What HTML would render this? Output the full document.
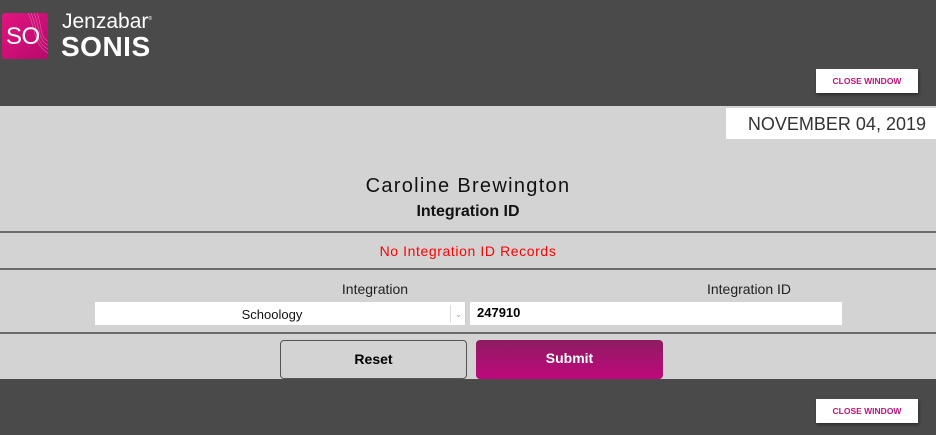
<!DOCTYPE html>
<html><head><meta charset="utf-8"><style>
*{margin:0;padding:0;box-sizing:border-box}
body{width:936px;height:435px;background:#d3d3d3;font-family:"Liberation Sans",sans-serif;position:relative;overflow:hidden}
.dark{position:absolute;left:0;width:936px;background:#4a4a4a}
.a{position:absolute}
.cw{position:absolute;left:816px;width:102px;height:24px;background:#fff;box-shadow:1px 2px 3px rgba(0,0,0,.4);color:#c0127a;font-size:8.5px;font-weight:bold;text-align:center;line-height:24px}
.hr{position:absolute;left:0;width:936px;height:2px;background:#6b6b6b}
.c{text-align:center;width:936px;left:0}
</style></head><body>
<div class="dark" style="top:0;height:106px"></div>
<div class="dark" style="top:379px;height:56px"></div>
<div class="a" style="left:2px;top:13px;width:46px;height:46px;border-radius:3px;background:linear-gradient(135deg,#e0157f,#b80a6e);overflow:hidden">
<svg width="46" height="46" style="position:absolute;left:0;top:0"><g stroke="rgba(255,255,255,.35)" fill="none" stroke-width=".6"><path d="M26 0 C34 14 30 30 46 40"/><path d="M29 0 C36 14 33 30 46 36"/><path d="M32 0 C38 14 36 28 46 32"/><path d="M35 0 C40 12 38 26 46 28"/></g></svg>
<div class="a" style="left:4px;top:10px;color:#fff;font-size:24px;letter-spacing:-0.5px">SO</div></div>
<div class="a" style="left:62px;top:10px;color:#fff;font-size:21px">Jenzabar<sup style="font-size:5px">®</sup></div>
<div class="a" style="left:61px;top:31px;color:#fff;font-size:28px;font-weight:bold;letter-spacing:0.5px">SONIS</div>
<div class="cw" style="top:69px">CLOSE WINDOW</div>
<div class="cw" style="top:399px">CLOSE WINDOW</div>
<div class="a" style="left:726px;top:108px;width:210px;height:31px;background:#fff;color:#333;font-size:18px;text-align:right;padding-right:10px;line-height:33px">NOVEMBER 04, 2019</div>
<div class="a c" style="top:175px;font-size:20px;color:#111;letter-spacing:1.3px">Caroline Brewington</div>
<div class="a c" style="top:203px;font-size:16px;font-weight:bold;color:#111">Integration ID</div>
<div class="hr" style="top:231px"></div>
<div class="a c" style="top:243px;font-size:14px;color:#f00;letter-spacing:0.6px">No Integration ID Records</div>
<div class="hr" style="top:268px"></div>
<div class="a" style="left:95px;width:560px;text-align:center;top:281px;font-size:14px;color:#222">Integration</div>
<div class="a" style="left:656px;width:186px;text-align:center;top:281px;font-size:14px;color:#222">Integration ID</div>
<div class="a" style="left:95px;top:302px;width:371px;height:23px;background:#fff;border-right:1px solid #ccc"><div class="a" style="left:0;width:354px;top:5px;text-align:center;font-size:13px;color:#111">Schoology</div><div class="a" style="left:355px;top:3px;width:16px;height:18px;border-left:1px solid #ddd;color:#aaa;font-size:9px;text-align:center;line-height:18px">⌄</div></div>
<div class="a" style="left:470px;top:302px;width:372px;height:23px;background:#fff;font-size:13px;font-weight:bold;padding-left:7px;line-height:22px">247910</div>
<div class="hr" style="top:332px"></div>
<div class="a" style="left:280px;top:340px;width:187px;height:39px;border:1px solid #555;border-radius:4px;text-align:center;line-height:37px;font-size:14px;font-weight:bold">Reset</div>
<div class="a" style="left:476px;top:340px;width:187px;height:39px;border-radius:4px;background:linear-gradient(#8c1c62,#c0087c);color:#fff;text-align:center;line-height:37px;font-size:14px;font-weight:bold">Submit</div>
</body></html>
